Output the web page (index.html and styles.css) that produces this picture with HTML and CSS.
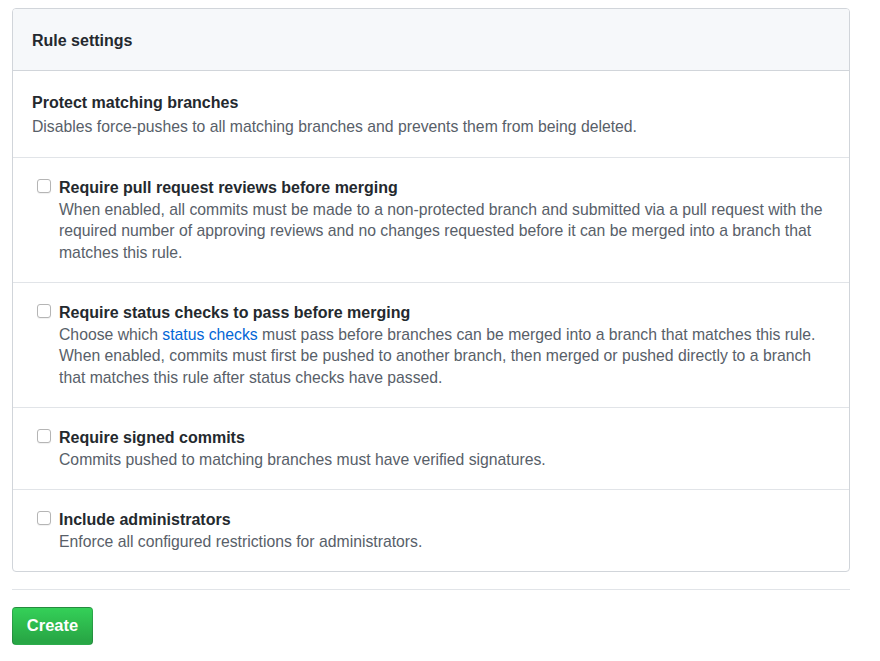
FILE: index.html
```html
<!DOCTYPE html>
<html lang="en">
<head>
  <meta charset="UTF-8" />
  <title>Branch protection rule</title>
  <link rel="stylesheet" href="styles.css">
</head>
<body>
  <form class="rule-form">
    <div class="box">
      <div class="box-header">Rule settings</div>

      <div class="box-row first">
        <div class="row-title">Protect matching branches</div>
        <p class="note">Disables force-pushes to all matching branches and prevents them from being deleted.</p>
      </div>

      <div class="box-row">
        <label class="check">
          <input type="checkbox">
          <span class="row-title">Require pull request reviews before merging</span>
        </label>
        <p class="note indent">When enabled, all commits must be made to a non-protected branch and submitted via a pull request with the required number of approving reviews and no changes requested before it can be merged into a branch that matches this rule.</p>
      </div>

      <div class="box-row">
        <label class="check">
          <input type="checkbox">
          <span class="row-title">Require status checks to pass before merging</span>
        </label>
        <p class="note indent">Choose which <a href="#">status checks</a> must pass before branches can be merged into a branch that matches this rule. When enabled, commits must first be pushed to another branch, then merged or pushed directly to a branch that matches this rule after status checks have passed.</p>
      </div>

      <div class="box-row">
        <label class="check">
          <input type="checkbox">
          <span class="row-title">Require signed commits</span>
        </label>
        <p class="note indent">Commits pushed to matching branches must have verified signatures.</p>
      </div>

      <div class="box-row">
        <label class="check">
          <input type="checkbox">
          <span class="row-title">Include administrators</span>
        </label>
        <p class="note indent">Enforce all configured restrictions for administrators.</p>
      </div>
    </div>

    <hr class="divider">

    <button type="submit" class="btn-primary">Create</button>
  </form>
</body>
</html>
```

FILE: styles.css
```css
body {
  font-family: "Liberation Sans", Arial, sans-serif;
  font-size: 15.75px;
  line-height: 21.5px;
  color: #24292e;
  background: #ffffff;
  margin: 0;
}
.rule-form {
  width: 838px;
  margin: 8px 0 0 12px;
}
.box {
  border: 1px solid #d1d5da;
  border-radius: 4px;
  overflow: hidden;
}
.box-header {
  background-color: #f6f8fa;
  border-bottom: 1px solid #d1d5da;
  padding: 20px 19px 18px;
  font-size: 16px;
  line-height: 23px;
  font-weight: bold;
}
.box-row {
  padding: 18px 16px 18.5px 19px;
  border-top: 1px solid #e1e4e8;
}
.box-row.first {
  border-top: none;
  padding: 20px 16px 19px 19px;
}
.box-row.first .row-title {
  margin-bottom: 2px;
}
.row-title {
  font-size: 16px;
  line-height: 23px;
  font-weight: bold;
  display: block;
}
.check {
  display: block;
  position: relative;
  padding-left: 27px;
}
.check input {
  -webkit-appearance: none;
  appearance: none;
  position: absolute;
  left: 5px;
  top: 3px;
  width: 14px;
  height: 14px;
  margin: 0;
  background: #ffffff;
  border: 1px solid #b5b5b5;
  border-radius: 3px;
  box-shadow: 0 1px 1px rgba(0, 0, 0, 0.06);
}
.note {
  margin: 0;
  color: #586069;
}
.note.indent {
  padding-left: 27px;
}
.note a {
  color: #0366d6;
  text-decoration: none;
}
.divider {
  border: 0;
  border-top: 1px solid #e1e4e8;
  margin: 17px 0 17px;
  height: 0;
}
.btn-primary {
  font-family: inherit;
  font-size: 16.5px;
  font-weight: bold;
  color: #ffffff;
  width: 81px;
  height: 38px;
  padding: 0;
  border: 1px solid rgba(27, 31, 35, 0.2);
  border-radius: 4px;
  background-color: #28a745;
  background-image: linear-gradient(-180deg, #34d058 0%, #28a745 90%);
  cursor: pointer;
}
```
